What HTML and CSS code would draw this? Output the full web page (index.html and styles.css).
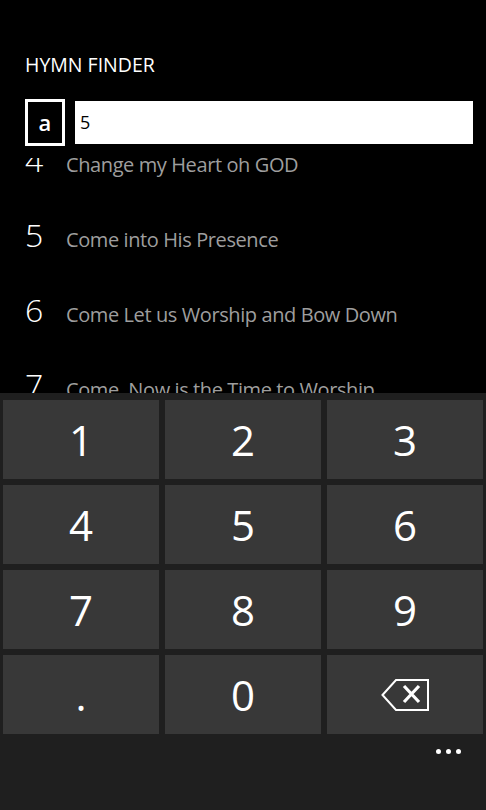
FILE: index.html
```html
<!DOCTYPE html>
<html lang="en">
<head>
  <meta charset="UTF-8" />
  <title>Hymn Finder</title>
  <link rel="stylesheet" href="styles.css">
</head>
<body>
  <div class="app">
    <div class="title">HYMN FINDER</div>
    <div class="search">
      <div class="mode">a</div>
      <div class="field">5</div>
    </div>
    <div class="list">
      <div class="items">
        <div class="row"><span class="num">4</span><span class="name">Change my Heart oh GOD</span></div>
        <div class="row"><span class="num">5</span><span class="name">Come into His Presence</span></div>
        <div class="row"><span class="num">6</span><span class="name">Come Let us Worship and Bow Down</span></div>
        <div class="row"><span class="num">7</span><span class="name">Come, Now is the Time to Worship</span></div>
      </div>
    </div>
    <div class="keyboard">
      <div class="keys">
        <div class="key">1</div>
        <div class="key">2</div>
        <div class="key">3</div>
        <div class="key">4</div>
        <div class="key">5</div>
        <div class="key">6</div>
        <div class="key">7</div>
        <div class="key">8</div>
        <div class="key">9</div>
        <div class="key">.</div>
        <div class="key">0</div>
        <div class="key">
          <svg width="48" height="32" viewBox="0 0 48 32">
            <path d="M1.5 16 L15 1 H47 V31 H15 Z" fill="none" stroke="#fff" stroke-width="2" stroke-linejoin="miter"/>
            <path d="M23 7 L38 23 M38 7 L23 23" stroke="#fff" stroke-width="3.2"/>
          </svg>
        </div>
      </div>
      <div class="appbar">
        <span class="dot"></span><span class="dot"></span><span class="dot"></span>
      </div>
    </div>
  </div>
</body>
</html>
```

FILE: styles.css
```css
html, body { margin: 0; padding: 0; background: #000; }
body { width: 486px; height: 810px; overflow: hidden; font-family: "Open Sans", "Noto Sans", sans-serif; color: #fff; }
.app { height: 810px; display: flex; flex-direction: column; }

.title { padding: 55px 25px 0; font-size: 19.5px; line-height: 20px; }

.search { display: flex; align-items: center; gap: 10px; margin-top: 24px; padding: 0 13px 0 25px; height: 47px; }
.mode { width: 40px; height: 47px; box-sizing: border-box; border: 3px solid #fff; display: flex; align-items: center; justify-content: center; font-size: 22px; font-weight: 600; padding-bottom: 2px; }
.field { flex: 1; height: 43px; background: #fff; color: #000; font-size: 18px; line-height: 43px; padding-left: 5px; }

.list { flex: 1; overflow: hidden; margin-top: 12px; }
.items { margin-top: -36px; }
.row { height: 75px; line-height: 75px; font-size: 32px; font-weight: 300; padding-left: 25px; white-space: nowrap; }
.num { display: inline-block; width: 41px; }
.name { font-size: 20px; font-weight: 400; letter-spacing: -0.4px; color: #9e9e9e; }

.keyboard { height: 417px; background: #1f1f1f; }
.keys { display: grid; grid-template-columns: repeat(3, 1fr); grid-auto-rows: 79px; gap: 6px; padding: 7px 3px 0; }
.key { background: #383838; display: flex; align-items: center; justify-content: center; font-size: 42px; line-height: 1; }
.appbar { display: flex; justify-content: flex-end; gap: 5px; padding: 15px 25px 0 0; }
.dot { width: 5px; height: 5px; border-radius: 50%; background: #fff; }
```
